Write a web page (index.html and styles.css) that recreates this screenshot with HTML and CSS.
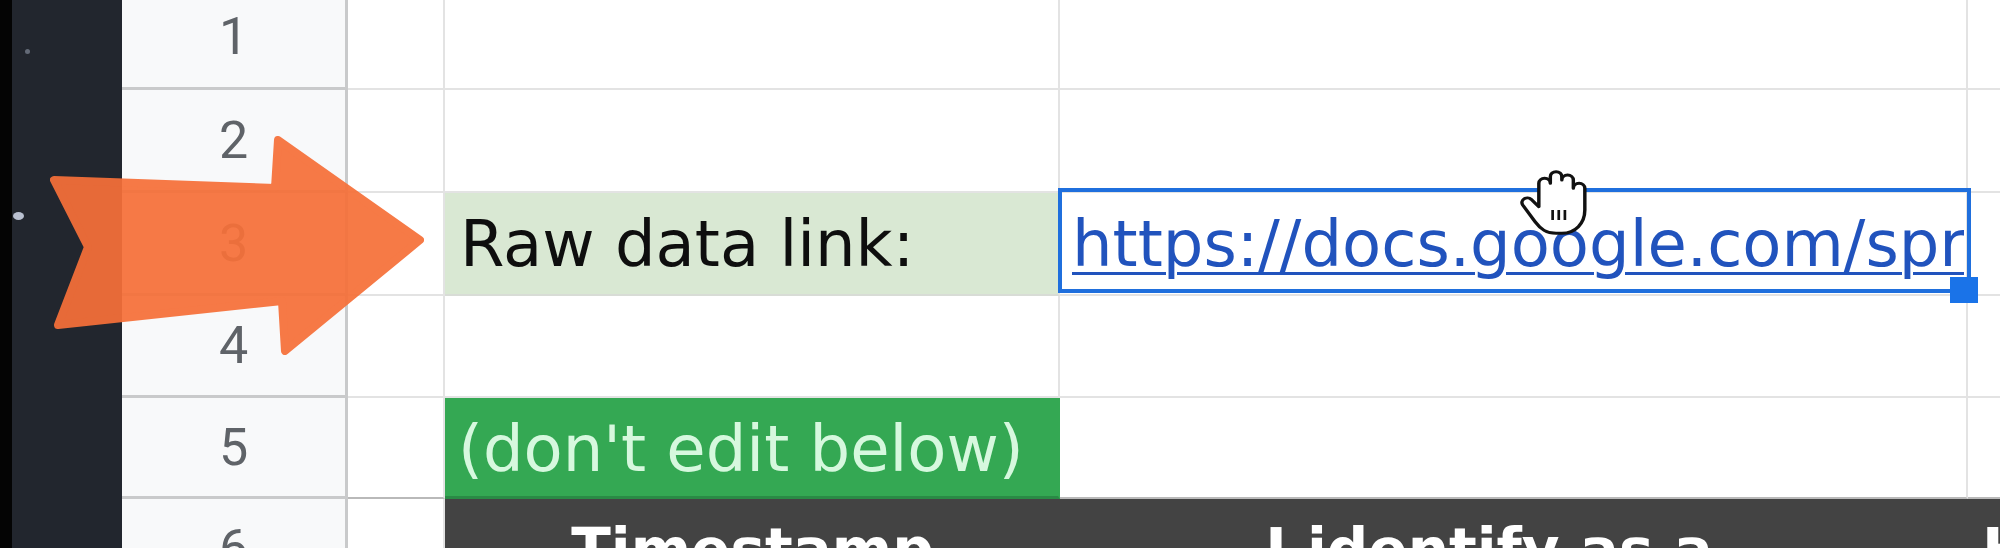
FILE: index.html
```html
<!DOCTYPE html>
<html>
<head>
<meta charset="utf-8">
<link rel="stylesheet" href="styles.css">
</head>
<body>
<div class="app">
  <div class="strip"></div>
  <aside class="sidebar">
    <span class="dot dot-sm"></span>
    <span class="dot dot-lg"></span>
  </aside>
  <div class="sheet">
    <div class="rh">1</div><div class="c"></div><div class="c"></div><div class="c"></div><div class="c"></div>
    <div class="rh">2</div><div class="c"></div><div class="c"></div><div class="c"></div><div class="c"></div>
    <div class="rh">3</div><div class="c"></div>
    <div class="c label">Raw data link:</div>
    <div class="c selected">
      <div class="link-wrap"><span class="link">https://docs.google.com/spreadsheets/d/1</span></div>
      <div class="sel-box"></div>
      <div class="fill-handle"></div>
    </div>
    <div class="c"></div>
    <div class="rh">4</div><div class="c"></div><div class="c"></div><div class="c"></div><div class="c"></div>
    <div class="rh">5</div><div class="c r5"></div>
    <div class="c r5 warn">(don't edit below)</div>
    <div class="c r5"></div><div class="c r5"></div>
    <div class="rh">6</div><div class="c"></div>
    <div class="hd">Timestamp</div>
    <div class="hd hd-c">I identify as a</div>
    <div class="hd hd-d">How</div>
  </div>
</div>

<svg class="arrow" width="440" height="370" viewBox="0 0 440 370">
  <g opacity="0.93">
    <polygon points="54,180 275,188 278,140 420,240 285,351 282,301 58,325 88,247" fill="#f67039" stroke="#f67039" stroke-width="8" stroke-linejoin="round"/>
  </g>
</svg>

<svg class="hand" width="92" height="80" viewBox="0 0 24 24" preserveAspectRatio="none">
  <path d="M7 14 V7 a1.5 1.5 0 0 1 3 0 V5 a1.5 1.5 0 0 1 3 0 V6 a1.5 1.5 0 0 1 3 0 V8.5 a1.5 1.5 0 0 1 3 0 V15 c0 4 -2.5 7 -6 7 h-1.5 c-2.5 0 -4 -1.2 -5.5 -3.5 L2.8 13.5 a1.4 1.4 0 0 1 2.2 -1.7 L7 14 Z" fill="#fff" stroke="#111" stroke-width="0.9" stroke-linejoin="round"/>
  <path d="M10.6 15 V18 M12.2 15 V18 M13.8 15 V18" stroke="#111" stroke-width="0.7"/>
</svg>
</body>
</html>
```

FILE: styles.css
```css
* { box-sizing: border-box; }
html, body {
  margin: 0;
  padding: 0;
  width: 2000px;
  height: 548px;
  overflow: hidden;
  background: #fff;
}
.app {
  display: flex;
  width: 2000px;
  height: 548px;
  overflow: hidden;
}
.strip {
  width: 12px;
  flex: none;
  background: #040404;
}
.sidebar {
  width: 110px;
  flex: none;
  background: #22262e;
  display: flex;
  flex-direction: column;
  align-items: flex-start;
  padding-top: 49px;
}
.dot {
  display: block;
  border-radius: 50%;
  background: #8f97a8;
}
.dot-sm {
  width: 5px;
  height: 5px;
  margin-left: 13px;
  opacity: 0.6;
}
.dot-lg {
  width: 11px;
  height: 8px;
  margin-top: 158px;
  margin-left: 1px;
  background: #b9c0d0;
}
.sheet {
  flex: 1;
  display: grid;
  grid-template-columns: 226px 97px 615px 908px 200px;
  grid-template-rows: 104px 103px 103px 102px 101px 102px;
  margin-top: -14px;
  height: 615px;
  font-family: "DejaVu Sans", sans-serif;
  font-size: 64px;
}
.rh {
  background: #f8f9fa;
  border-right: 3px solid #c9cacb;
  border-bottom: 3px solid #c9cacb;
  display: flex;
  align-items: center;
  justify-content: center;
  font-family: Roboto, "Liberation Sans", sans-serif;
  font-size: 52px;
  color: #5f6368;
}
.c {
  border-right: 2px solid #e3e3e3;
  border-bottom: 2px solid #e3e3e3;
  display: flex;
  align-items: center;
  white-space: nowrap;
  min-width: 0;
}
.label {
  background: #d9e8d3;
  color: #0e0e0e;
  padding-left: 15px;
  border-bottom-color: #d8dcd6;
}
.r5 {
  border-bottom-color: #b9b9b9;
}
.warn {
  background: #34a853;
  color: #d6f8de;
  padding-left: 13px;
  padding-top: 4px;
  border-bottom: 3px solid #2a8a45;
  border-right-color: #34a853;
}
.selected {
  position: relative;
  padding-left: 12px;
  padding-right: 2px;
}
.link-wrap {
  overflow: hidden;
  width: 100%;
}
.link {
  color: #2153bd;
  text-decoration: underline;
  text-decoration-thickness: 3px;
  text-underline-offset: 6px;
}
.sel-box {
  position: absolute;
  left: -2px;
  top: -5px;
  width: 913px;
  height: 105px;
  border: 4px solid #1f6fdd;
}
.fill-handle {
  position: absolute;
  left: 890px;
  top: 84px;
  width: 28px;
  height: 26px;
  background: #1a73e8;
}
.hd {
  background: #434343;
  color: #fff;
  font-weight: bold;
  font-size: 58px;
  line-height: 1.2;
  text-align: center;
  padding-top: 17px;
  white-space: nowrap;
  overflow: hidden;
}
.hd-c {
  padding-right: 50px;
}
.hd-d {
  text-align: left;
  padding-left: 14px;
}
.arrow {
  position: absolute;
  left: 0;
  top: 0;
  pointer-events: none;
}
.hand {
  position: absolute;
  left: 1512px;
  top: 160px;
  pointer-events: none;
}
```
